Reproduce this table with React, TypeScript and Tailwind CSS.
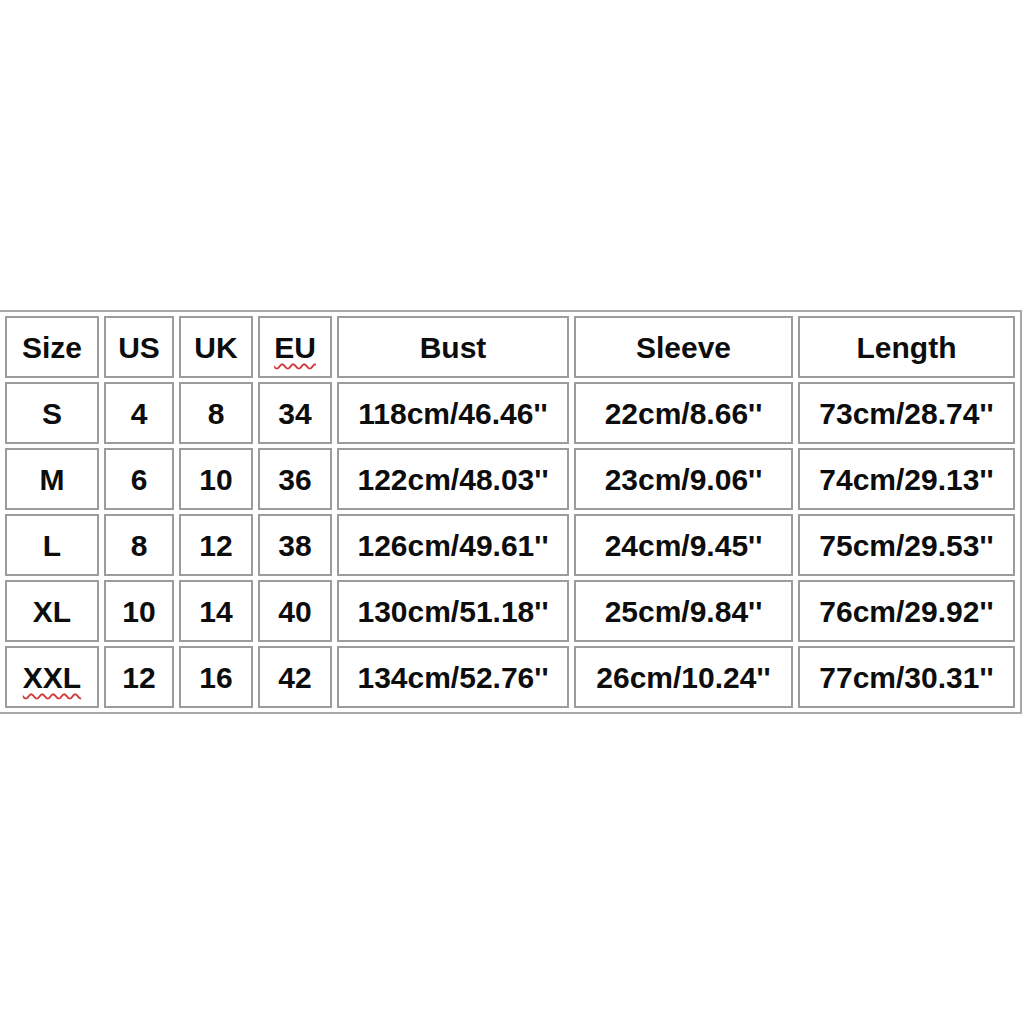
// Size chart – bust / sleeve / length by size

interface SizeRow {
  size: string
  us: string
  uk: string
  eu: string
  bust: string
  sleeve: string
  length: string
}

const ROWS: SizeRow[] = [
  { size: 'S',   us: '4',  uk: '8',  eu: '34', bust: "118cm/46.46''", sleeve: "22cm/8.66''",  length: "73cm/28.74''" },
  { size: 'M',   us: '6',  uk: '10', eu: '36', bust: "122cm/48.03''", sleeve: "23cm/9.06''",  length: "74cm/29.13''" },
  { size: 'L',   us: '8',  uk: '12', eu: '38', bust: "126cm/49.61''", sleeve: "24cm/9.45''",  length: "75cm/29.53''" },
  { size: 'XL',  us: '10', uk: '14', eu: '40', bust: "130cm/51.18''", sleeve: "25cm/9.84''",  length: "76cm/29.92''" },
  { size: 'XXL', us: '12', uk: '16', eu: '42', bust: "134cm/52.76''", sleeve: "26cm/10.24''", length: "77cm/30.31''" },
]

const CELL = 'h-[62px] p-0 border-2 border-[#9c9c9c] text-center align-middle font-bold text-[30px] text-[#0d0d0d]'

// spell-check squiggle, as in the source document
function Squiggle({ children }: { children: string }) {
  return (
    <span className="underline decoration-wavy decoration-[#cf3b3b] decoration-[1.5px] underline-offset-[5px]">
      {children}
    </span>
  )
}

export default function App() {
  return (
    <div
      className="min-h-[1024px] w-[1024px] bg-white flex items-center"
      style={{ fontFamily: '"Liberation Sans", Arial, sans-serif' }}
    >
      <table className="-ml-[2px] border-separate border-spacing-x-[5px] border-spacing-y-[4px] border-2 border-[#a8a8a8]">
        <thead>
          <tr>
            <th className={`${CELL} w-[94px]`}>Size</th>
            <th className={`${CELL} w-[70px]`}>US</th>
            <th className={`${CELL} w-[74px]`}>UK</th>
            <th className={`${CELL} w-[74px]`}><Squiggle>EU</Squiggle></th>
            <th className={`${CELL} w-[232px]`}>Bust</th>
            <th className={`${CELL} w-[219px]`}>Sleeve</th>
            <th className={`${CELL} w-[217px]`}>Length</th>
          </tr>
        </thead>
        <tbody>
          {ROWS.map(r => (
            <tr key={r.size}>
              <td className={CELL}>{r.size === 'XXL' ? <Squiggle>XXL</Squiggle> : r.size}</td>
              <td className={CELL}>{r.us}</td>
              <td className={CELL}>{r.uk}</td>
              <td className={CELL}>{r.eu}</td>
              <td className={CELL}>{r.bust}</td>
              <td className={CELL}>{r.sleeve}</td>
              <td className={CELL}>{r.length}</td>
            </tr>
          ))}
        </tbody>
      </table>
    </div>
  )
}
